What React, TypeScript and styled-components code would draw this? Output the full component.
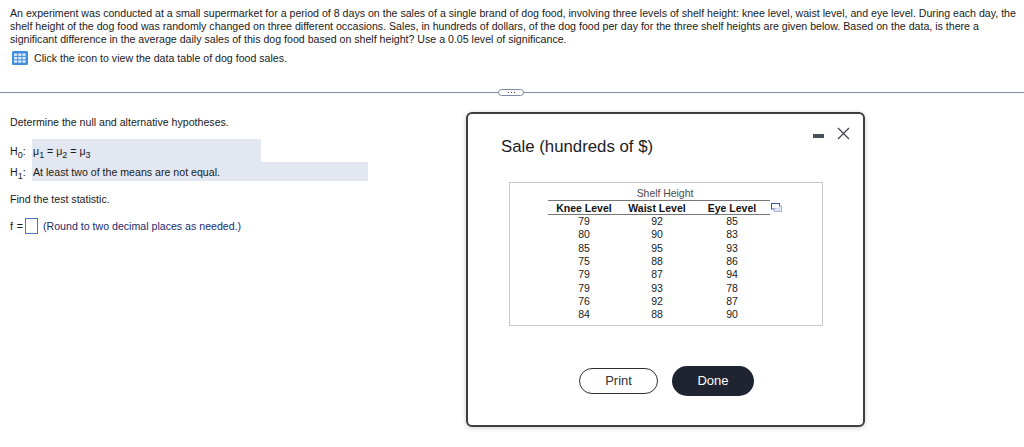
import React from 'react';
import styled, { createGlobalStyle } from 'styled-components';

const Global = createGlobalStyle`
  html, body { margin: 0; padding: 0; background: #fff; }
  body { font-family: "Liberation Sans", Arial, sans-serif; color: #1a1a1a; }
`;

const Page = styled.div`
  position: relative;
  width: 1024px;
  height: 447px;
  overflow: hidden;
  background: #fff;
  font-size: 10.62px;
`;

const Question = styled.div`
  padding: 7px 8px 0 10px;
  height: 92px;
  box-sizing: border-box;
`;

const Paragraph = styled.p`
  margin: 0;
  line-height: 13px;
`;

const IconRow = styled.div`
  display: flex;
  align-items: center;
  gap: 6px;
  margin: 4px 0 0 2px;
  height: 16px;
`;

const Divider = styled.div`
  display: flex;
  align-items: center;
  height: 1px;
  background: #7f8aa3;
  justify-content: flex-start;
`;

const Handle = styled.div`
  width: 26px;
  height: 7px;
  margin-left: 498px;
  border: 1px solid #7f8aa3;
  border-radius: 4px;
  background: #fff;
  box-sizing: border-box;
  display: flex;
  align-items: center;
  justify-content: center;
  gap: 2px;
`;

const HandleDot = styled.span`
  width: 1px;
  height: 1px;
  background: #444;
`;

const Answer = styled.div`
  padding: 23px 0 0 10px;
`;

const Line = styled.div`
  line-height: 13px;
`;

const HypRow = styled.div<{ $top: number }>`
  display: flex;
  margin-top: ${(p) => p.$top}px;
`;

const HypLabel = styled.div`
  width: 22px;
  display: flex;
  align-items: center;
  sub { font-size: 9px; line-height: 0; vertical-align: -3px; }
`;

const HypBand = styled.div<{ $width: number; $height: number }>`
  width: ${(p) => p.$width}px;
  height: ${(p) => p.$height}px;
  background: #e3e7f1;
  display: flex;
  align-items: center;
  padding-left: 1px;
  box-sizing: border-box;
  sub { font-size: 9px; line-height: 0; vertical-align: -3px; }
`;

const FindLine = styled(Line)`
  margin-top: 12px;
`;

const StatRow = styled.div`
  display: flex;
  align-items: center;
  margin-top: 12px;
  height: 16px;
`;

const StatName = styled.span`
  width: 15px;
  letter-spacing: 0.4px;
`;

const AnswerBox = styled.span`
  display: inline-block;
  width: 13px;
  height: 16px;
  box-sizing: border-box;
  margin-right: 5px;
  border: 1px solid #4a78b8;
`;

const Hint = styled.span`
  color: #1c2a6e;
`;

const Modal = styled.div`
  position: absolute;
  left: 466px;
  top: 112px;
  width: 399px;
  height: 315px;
  box-sizing: border-box;
  background: #fff;
  border: 2px solid #3f3f42;
  border-radius: 6px;
  box-shadow: 0 1px 5px rgba(0, 0, 0, 0.2);
  display: flex;
  flex-direction: column;
`;

const ModalHead = styled.div`
  display: flex;
  justify-content: space-between;
  align-items: flex-start;
  padding: 13px 13px 0 33px;
  height: 68px;
  box-sizing: border-box;
`;

const ModalTitle = styled.div`
  margin-top: 10px;
  font-size: 16.8px;
  line-height: 20px;
  color: #1c1c1f;
`;

const WindowControls = styled.div`
  display: flex;
  align-items: center;
  gap: 13px;
`;

const TableFrame = styled.div`
  margin-left: 41px;
  width: 314px;
  height: 144px;
  box-sizing: border-box;
  border: 1px solid #c9c9c9;
  padding-top: 5px;
  position: relative;
`;

const TableCaption = styled.div`
  text-align: center;
  color: #4a4a4a;
  font-size: 10.4px;
  line-height: 12px;
  padding-right: 2px;
`;

const DataTable = styled.table`
  border-collapse: collapse;
  table-layout: fixed;
  margin-left: 38px;
  width: 222px;
  font-size: 10.5px;
  th {
    font-weight: bold;
    height: 13px;
    padding: 0;
    line-height: 12px;
    border-top: 1px solid #777;
    border-bottom: 1px solid #777;
    color: #111;
  }
  td {
    padding: 0;
    height: 13.3px;
    line-height: 13px;
    text-align: center;
  }
`;

const KneeCol = styled.col`
  width: 72px;
`;

const WaistCol = styled.col`
  width: 74px;
`;

const EyeCol = styled.col`
  width: 76px;
`;

const CopyIcon = styled.svg`
  position: absolute;
  left: 261px;
  top: 20px;
`;

const ModalFoot = styled.div`
  display: flex;
  gap: 14px;
  padding: 40px 0 0 111px;
`;

const PillButton = styled.button<{ $dark?: boolean }>`
  height: ${(p) => (p.$dark ? 30 : 26)}px;
  width: ${(p) => (p.$dark ? 82 : 79)}px;
  margin-top: ${(p) => (p.$dark ? 0 : 2)}px;
  border-radius: 15px;
  border: ${(p) => (p.$dark ? 'none' : '1.5px solid #2b2f38')};
  background: ${(p) => (p.$dark ? '#1f2430' : '#fff')};
  color: ${(p) => (p.$dark ? '#fff' : '#333')};
  font-family: "Liberation Sans", Arial, sans-serif;
  font-size: 13px;
  padding: 0 0 2px;
`;

const sales = [
  [79, 92, 85],
  [80, 90, 83],
  [85, 95, 93],
  [75, 88, 86],
  [79, 87, 94],
  [79, 93, 78],
  [76, 92, 87],
  [84, 88, 90],
];

function GridIcon() {
  return (
    <svg width="16" height="14" viewBox="0 0 16 14">
      <rect x="0" y="0" width="16" height="14" rx="1.5" fill="#3f8fdc" />
      {[0, 1, 2].map((r) =>
        [0, 1, 2].map((c) => (
          <rect key={`${r}-${c}`} x={2 + c * 4.2} y={2.5 + r * 3.4} width="3.2" height="2.4" fill="#dcebfa" />
        ))
      )}
    </svg>
  );
}

export default function App(): JSX.Element {
  return (
    <Page>
      <Global />
      <Question>
        <Paragraph>
          An experiment was conducted at a small supermarket for a period of 8 days on the sales of a single brand of dog food, involving three levels of shelf height: knee level, waist level, and eye level. During each day, the
          <br />
          shelf height of the dog food was randomly changed on three different occasions. Sales, in hundreds of dollars, of the dog food per day for the three shelf heights are given below. Based on the data, is there a
          <br />
          significant difference in the average daily sales of this dog food based on shelf height? Use a 0.05 level of significance.
        </Paragraph>
        <IconRow>
          <GridIcon />
          <span>Click the icon to view the data table of dog food sales.</span>
        </IconRow>
      </Question>
      <Divider>
        <Handle>
          <HandleDot />
          <HandleDot />
          <HandleDot />
        </Handle>
      </Divider>
      <Answer>
        <Line>Determine the null and alternative hypotheses.</Line>
        <HypRow $top={10}>
          <HypLabel>
            <span>H<sub>0</sub>:</span>
          </HypLabel>
          <HypBand $width={229} $height={23}>
            <span>μ<sub>1</sub> = μ<sub>2</sub> = μ<sub>3</sub></span>
          </HypBand>
        </HypRow>
        <HypRow $top={0}>
          <HypLabel>
            <span>H<sub>1</sub>:</span>
          </HypLabel>
          <HypBand $width={336} $height={19}>
            At least two of the means are not equal.
          </HypBand>
        </HypRow>
        <FindLine>Find the test statistic.</FindLine>
        <StatRow>
          <StatName>f =</StatName>
          <AnswerBox />
          <Hint>(Round to two decimal places as needed.)</Hint>
        </StatRow>
      </Answer>
      <Modal>
        <ModalHead>
          <ModalTitle>Sale (hundreds of $)</ModalTitle>
          <WindowControls>
            <svg width="11" height="12" viewBox="0 0 11 12">
              <rect x="0" y="6" width="11" height="4" fill="#4a4f5c" />
            </svg>
            <svg width="13" height="13" viewBox="0 0 13 13">
              <path d="M1 1 L12 12 M12 1 L1 12" stroke="#3c4252" strokeWidth="1.2" fill="none" />
            </svg>
          </WindowControls>
        </ModalHead>
        <TableFrame>
          <TableCaption>Shelf Height</TableCaption>
          <DataTable>
            <colgroup>
              <KneeCol />
              <WaistCol />
              <EyeCol />
            </colgroup>
            <thead>
              <tr>
                <th>Knee Level</th>
                <th>Waist Level</th>
                <th>Eye Level</th>
              </tr>
            </thead>
            <tbody>
              {sales.map((row, i) => (
                <tr key={i}>
                  {row.map((v, j) => (
                    <td key={j}>{v}</td>
                  ))}
                </tr>
              ))}
            </tbody>
          </DataTable>
          <CopyIcon width="11" height="9" viewBox="0 0 11 9">
            <rect x="0.5" y="0.5" width="8" height="5.5" fill="#fff" stroke="#3a55b5" strokeWidth="1" />
            <path d="M9 3 H10.5 V8.5 H3 V6.5" fill="#dde3f3" stroke="#9aa6cf" strokeWidth="0.8" />
          </CopyIcon>
        </TableFrame>
        <ModalFoot>
          <PillButton>Print</PillButton>
          <PillButton $dark>Done</PillButton>
        </ModalFoot>
      </Modal>
    </Page>
  );
}
